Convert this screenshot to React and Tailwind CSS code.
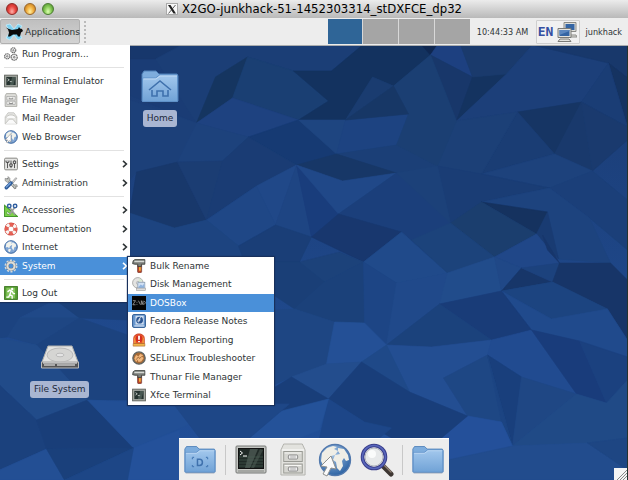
import React from "react";

const FACETS = [
  ["0,45 182,50 197,123 130,95 0,95", "#1a3c75"],
  ["130,45 182,45 182,50 156,59 130,59", "#17376c"],
  ["182,45 363,45 332,71 294,71 248,57 216,77 197,123 156,59", "#1b3e76"],
  ["248,57 216,77 197,123 233,98", "#153560"],
  ["248,57 233,98 299,120 329,101 294,71", "#1a3f73"],
  ["294,71 332,71 363,45 422,45 431,55 394,86 373,77 346,120 299,120 329,101", "#13325f"],
  ["373,77 394,86 346,120", "#1a3c70"],
  ["233,98 197,123 249,137 299,120", "#1e4280"],
  ["130,100 197,123 178,162 137,172 130,180", "#1c4079"],
  ["197,123 249,137 223,161 178,162", "#1d427c"],
  ["249,137 299,120 337,154 297,165", "#163a73"],
  ["299,120 346,120 337,154", "#1e4580"],
  ["346,120 409,114 397,145 337,154", "#1d4381"],
  ["337,154 397,145 438,166 397,173 370,165", "#1b3f77"],
  ["297,165 337,154 397,173 343,181", "#173767"],
  ["137,172 178,162 207,220 175,228 130,213", "#18386b"],
  ["178,162 223,161 207,220", "#1b3d73"],
  ["223,161 249,137 297,165 257,186 207,220", "#1a3c74"],
  ["297,165 257,186 276,225", "#204888"],
  ["257,186 207,220 239,246 276,225", "#1f4786"],
  ["130,213 175,228 207,220 239,246 245,262 130,262", "#1d4480"],
  ["297,165 276,225 300,262 312,237", "#1e4583"],
  ["297,165 312,237 339,214", "#193d7c"],
  ["297,165 343,181 397,173 339,214", "#204888"],
  ["397,173 451,223 432,259 402,232 339,214", "#1b3f7b"],
  ["339,214 312,237 364,262 402,232", "#18376e"],
  ["276,225 239,246 245,262 300,262 312,237", "#1a3e77"],
  ["422,45 438,45 431,55", "#0f2750"],
  ["431,55 438,45 461,45 473,77", "#1d4080"],
  ["431,55 473,77 457,121", "#18376a"],
  ["473,77 507,74 457,121", "#143360"],
  ["461,45 533,45 507,74 473,77", "#1a3a6c"],
  ["533,45 609,63 582,102 518,112 457,121 507,74", "#1c3f79"],
  ["533,45 628,45 628,78 609,63", "#18386b"],
  ["609,63 628,78 628,127", "#153361"],
  ["609,63 628,127 582,102", "#1a3d75"],
  ["518,112 582,102 555,154", "#163564"],
  ["582,102 593,171 555,154", "#19396c"],
  ["582,102 628,127 628,140 593,171", "#1a3a6e"],
  ["518,112 555,154 482,174", "#1a3d74"],
  ["457,121 518,112 482,174 438,166", "#1c4077"],
  ["394,86 431,55 457,121 438,166 397,145 409,114", "#1b3f73"],
  ["394,86 346,120 409,114", "#173766"],
  ["482,174 555,154 593,171 550,188", "#1d427c"],
  ["593,171 628,200 628,250 590,218 550,188", "#1b3f79"],
  ["438,166 482,174 550,188 482,202 451,223", "#1a3d75"],
  ["397,173 438,166 451,223", "#1c4179"],
  ["482,202 550,188 590,218 611,263 559,259 548,212", "#1d437e"],
  ["482,202 548,212 537,234", "#15325f"],
  ["548,212 559,259 537,234", "#193b72"],
  ["482,202 451,223 495,257 537,234", "#1b3e6e"],
  ["402,232 432,259 448,273 397,283 364,262", "#204a8a"],
  ["451,223 495,257 448,273 412,240", "#1c437b"],
  ["537,234 495,257 522,268 560,263", "#204788"],
  ["300,262 340,252 364,262 325,282", "#1c427a"],
  ["274,262 300,262 325,282 295,309 274,295", "#1a3f77"],
  ["364,262 325,282 295,309 335,322 365,323", "#1b417a"],
  ["364,262 397,283 387,345 365,323", "#1d4585"],
  ["397,283 448,273 440,304 387,345", "#20498a"],
  ["448,273 495,257 502,291 440,304", "#214c8b"],
  ["495,257 522,268 502,291", "#204887"],
  ["522,268 553,282 502,291", "#173669"],
  ["522,268 560,263 553,282", "#1c427d"],
  ["543,235 560,263 548,250", "#17366b"],
  ["560,263 611,263 628,280 628,340 608,309 553,282", "#173568"],
  ["502,291 553,282 608,309 552,319", "#1c4480"],
  ["502,291 552,319 608,309 628,340 628,357 532,330", "#204a8c"],
  ["440,304 502,291 532,330 492,340", "#193c78"],
  ["440,304 492,340 432,347 387,345", "#1b427c"],
  ["387,345 432,347 492,340 488,355 444,378 468,416 410,392", "#234e92"],
  ["488,355 492,340 532,330 577,394 522,377", "#214b90"],
  ["532,330 580,341 607,403 577,394", "#193c7b"],
  ["580,341 628,357 628,385 607,403", "#1b417f"],
  ["488,355 444,378 468,416 502,422", "#1e4784"],
  ["488,355 522,377 513,446", "#193f7c"],
  ["488,355 513,446 502,422", "#1c4482"],
  ["522,377 577,394 513,446", "#1f4784"],
  ["577,394 607,403 628,380 628,438 588,443 513,446", "#204a86"],
  ["468,416 502,422 513,446 448,465 442,435", "#24509a"],
  ["513,446 588,443 628,470 628,480 448,480 448,460", "#224c8d"],
  ["588,443 628,438 628,470", "#1e4683"],
  ["274,310 295,309 335,322 327,364 292,377 274,385", "#1e4683"],
  ["335,322 365,323 387,345 362,362 327,364", "#245096"],
  ["387,345 410,392 362,362", "#1f4988"],
  ["292,377 327,364 362,362 329,399", "#234d8d"],
  ["274,388 292,377 329,399 283,413 274,411", "#193e79"],
  ["362,362 410,392 468,416 442,438 392,438 365,422 329,399", "#193e7a"],
  ["329,399 365,422 392,428 380,438 320,438", "#1d4688"],
  ["274,413 329,399 320,430 300,438 250,438", "#245299"],
  ["0,300 56,300 20,318 8,337 0,338", "#1c4380"],
  ["56,300 80,318 20,318", "#204988"],
  ["56,300 128,300 128,320 80,318", "#1b4079"],
  ["20,318 80,318 37,345 8,337", "#1e4683"],
  ["80,318 128,335 128,400 88,400 37,345", "#1c437f"],
  ["0,338 37,345 88,400 37,420 0,385", "#214b89"],
  ["0,385 37,420 47,449 0,470", "#1b417d"],
  ["37,420 88,400 134,448 47,449", "#193e79"],
  ["88,400 174,404 200,420 134,448", "#224f95"],
  ["0,470 47,449 65,480 0,480", "#234f94"],
  ["47,449 134,448 65,480", "#1a407b"],
  ["134,448 180,430 180,480 128,480", "#24519a"],
  ["134,448 128,480 65,480", "#1d4686"],
  ["174,404 290,404 250,438 200,438", "#1e4787"],
];

function Wallpaper() {
  return (
    <svg className="absolute inset-0 h-full w-full" viewBox="0 46 628 434" preserveAspectRatio="xMidYMid slice" aria-hidden="true">
      <defs>
        <linearGradient id="sky" x1="0" y1="0" x2="0" y2="1">
          <stop offset="0" stopColor="#1a3b72" />
          <stop offset="1" stopColor="#22509a" />
        </linearGradient>
      </defs>
      <rect y="45" width="628" height="435" fill="url(#sky)" />
      {FACETS.map(([points, fill]) => (
        <polygon key={points} points={points} fill={fill} stroke={fill} strokeWidth="0.6" />
      ))}
    </svg>
  );
}

function Glyph({ children, className = "h-3.5 w-3.5" }) {
  return (
    <svg className={`${className} shrink-0`} viewBox="0 0 24 24" fill="none" aria-hidden="true">
      {children}
    </svg>
  );
}

const globe = (
  <>
    <circle cx="12" cy="12" r="10.8" fill="#7fa5d4" stroke="#35619c" strokeWidth="1.6" />
    <path d="M4 6 9 2.5l5 .5-2 3 2 2-4 3-1 3-3-2-3 1zM15 4l5 3 1 4-3 1-2 6-3-5 1-4-2-2zM8 15l4 1-2 5-3-2z" fill="#f1f2ec" />
  </>
);

const icons = {
  run: (
    <g stroke="#6c6c6c" strokeWidth="2" fill="#eee">
      <circle cx="16" cy="5.5" r="4.2" strokeDasharray="2.6 .8" />
      <circle cx="5.5" cy="16" r="4.5" strokeDasharray="2.6 .8" />
      <circle cx="17.5" cy="17.5" r="5.2" strokeDasharray="2.6 .8" />
      <circle cx="16" cy="5.5" r="1" strokeWidth="1.4" />
      <circle cx="5.5" cy="16" r="1.2" strokeWidth="1.4" />
      <circle cx="17.5" cy="17.5" r="1.4" strokeWidth="1.4" />
    </g>
  ),
  terminal: (
    <>
      <rect x="1" y="2" width="22" height="20" fill="#a4a8a2" stroke="#60645e" strokeWidth="1.6" />
      <rect x="4" y="5" width="16" height="14" fill="#263330" />
      <path d="m6 8 3 2-3 2M10 13h4" stroke="#e6eae6" strokeWidth="1.3" />
      <path d="m14 5-4 14h6l4-14z" fill="#71827a" opacity=".45" />
    </>
  ),
  files: (
    <>
      <path d="M4 1h16l2 4v18H2V5z" fill="#ddddd9" stroke="#a0a09b" strokeWidth="1.3" />
      <rect x="5" y="6" width="14" height="6" fill="#f3f3f0" stroke="#999" />
      <rect x="5" y="14" width="14" height="6" fill="#f3f3f0" stroke="#999" />
      <path d="M9 8v2h6V8M9 16v2h6v-2" stroke="#777" strokeWidth="1.4" />
    </>
  ),
  mail: (
    <>
      <path d="M2 10 7 3h10l5 7v12H2z" fill="#e6e6e3" stroke="#c0c0bc" strokeWidth="1.3" />
      <path d="m2 22 7-8h6l7 8M3 12c3-7 15-7 18 0" stroke="#bdbdb8" strokeWidth="1.4" fill="#fafafa" />
    </>
  ),
  web: (
    <>
      {globe}
      <path d="M12 6v15l-3-3-3 4-2-1 2-4H2z" fill="#fff" stroke="#888" strokeWidth="1" />
    </>
  ),
  internet: globe,
  settings: (
    <>
      <rect x="1" y="2" width="22" height="20" rx="2" fill="#e6e6e4" stroke="#858581" strokeWidth="1.7" />
      <path d="M6 6v13M12 6v13M18 6v13" stroke="#444" strokeWidth="1.5" />
      <path d="M3.5 6v3h5V6M10 12h4v4h-4zM16 7h4v4h-4z" stroke="#333" strokeWidth="1.5" fill="#eee" />
    </>
  ),
  admin: (
    <>
      <path d="m6 6 13 14" stroke="#777b78" strokeWidth="4.5" strokeLinecap="round" />
      <path d="m6 6 13 14" stroke="#d8dad6" strokeWidth="2.3" strokeLinecap="round" />
      <path d="M2 4v4l4 3 4-3V4L7 1v4H5zM16 18l2-3h4l1 3h-3v3l-2 1z" fill="#c2c5c0" stroke="#777" />
      <path d="m13 11 7-8 2 1-7 9z" fill="#ddd" stroke="#777" />
      <path d="m4 20 8-8" stroke="#2e5c9b" strokeWidth="6" strokeLinecap="round" />
      <path d="m4 19 7-7" stroke="#7ba6dc" strokeWidth="2" strokeLinecap="round" />
    </>
  ),
  accessories: (
    <>
      <path d="M1 4v19h22z" fill="#7ed24b" stroke="#43962a" strokeWidth="1.8" />
      <path d="M5 14v5h6z" fill="#fff" stroke="#43962a" />
      <path d="m18 8-9 12M10 8l9 12" stroke="#9a9d9a" strokeWidth="3" />
      <circle cx="9" cy="5" r="3" stroke="#315fa0" strokeWidth="2.5" fill="#fff" />
      <circle cx="19" cy="5" r="3" stroke="#315fa0" strokeWidth="2.5" fill="#fff" />
    </>
  ),
  docs: (
    <>
      <circle cx="12" cy="12" r="7.8" stroke="#c84037" strokeWidth="7" />
      <circle cx="12" cy="12" r="7.8" stroke="#e66054" strokeWidth="5.3" />
      <circle cx="12" cy="12" r="7.8" stroke="#f8f6f4" strokeWidth="5.5" strokeDasharray="5 7.25" strokeDashoffset="-3.6" />
    </>
  ),
  gear: (
    <>
      <circle cx="12" cy="12" r="9.5" stroke="#d5d9d9" strokeWidth="3.2" strokeDasharray="3.6 2.35" />
      <circle cx="12" cy="12" r="6.2" stroke="#777" strokeWidth="5" />
      <circle cx="12" cy="12" r="6.2" stroke="#dddeda" strokeWidth="3.7" />
    </>
  ),
  logout: (
    <>
      <rect x="1" y="1" width="22" height="22" fill="#559d32" stroke="#38751b" strokeWidth="1.5" />
      <rect x="4" y="3" width="15" height="18" fill="#84c45c" />
      <circle cx="14" cy="5" r="2" fill="#fff" />
      <path d="m6 10 4-3 4 2 2 4h3M12 9l-2 6 4 2v5M10 15l-2 4H4" stroke="#fff" strokeWidth="2.4" />
    </>
  ),
  hammer: (
    <>
      <rect x="9.5" y="9" width="7" height="14.500" rx="2" fill="#bd432a" stroke="#5b3023" />
      <path d="M12 13h3v7h-3z" fill="#efb238" />
      <path d="M2 3 5 1h17v8h-6v4h-6V9H5L1 8z" fill="#7d807c" stroke="#393c39" strokeWidth="1.4" />
      <path d="M4 3h17v2.500H4z" fill="#d6d9d4" />
    </>
  ),
  disk: (
    <>
      <circle cx="10" cy="10" r="9" fill="#e4e4e2" stroke="#a5a5a2" strokeWidth="1.5" />
      <path d="m10 10 3-8 5 4z" fill="#d7ead0" />
      <circle cx="10" cy="10" r="2.5" fill="#fff" stroke="#999" />
      <rect x="10" y="9" width="12" height="11" fill="#d2e1f4" stroke="#879aae" strokeWidth="1.3" />
      <path d="m11 17 4-4 3 2 3-4v8H11z" fill="#8fb3df" />
      <rect x="8" y="19" width="15" height="4" fill="#ddd" stroke="#999" />
    </>
  ),
  dos: (
    <>
      <rect width="24" height="24" fill="#050505" />
      <path d="M1.500 8h4.500l-4.500 7H6M8.500 10v1.500M8.500 13.500V15M11 8l3.500 7M16 15V8l3 7V8M21 8.500l2 3-2 3" stroke="#a8a8a8" strokeWidth="1.300" />
    </>
  ),
  fedora: (
    <>
      <rect x="1" y="1" width="22" height="22" rx="2" fill="#6997ce" stroke="#2e5a94" strokeWidth="1.7" />
      <path d="M6 3h14v15H6z" fill="#d3e1f2" />
      <circle cx="13" cy="10.500" r="5.800" fill="#2b5591" />
      <path d="M15.500 6.500c-2.500-.5-3 1-3 3v2c0 2.500-3 2-2.500.5s1.500-2 4.500-2" stroke="#fff" strokeWidth="1.5" />
      <path d="M4 20.500h17" stroke="#fff" strokeWidth="1.500" />
    </>
  ),
  problem: (
    <>
      <path d="M3 18V9c0-10 18-10 18 0v9z" fill="#e8562a" stroke="#c8341a" strokeWidth="1.4" />
      <path d="M4 17V9l2-4v12M20 17V9l-2-4v12" fill="#f8b342" />
      <path d="M2 18h20v4.500H2z" fill="#f0b44a" stroke="#a8672a" />
      <circle cx="12" cy="10" r="6" fill="#d52e22" />
      <path d="M12 4.500v7M12 13.500V16" stroke="#fff" strokeWidth="3" />
    </>
  ),
  selinux: (
    <>
      <circle cx="12" cy="12" r="10.5" fill="#a66a36" stroke="#606462" strokeWidth="2.4" />
      <path d="m4 13 3-6 4 2 3-4 5 2-2 3 3 2-4 6-5 1-1-4-3 4z" fill="#f2b77c" />
      <path d="m7 15 4-5 2 3 4-4" stroke="#8d5a30" strokeWidth="1.300" />
    </>
  ),
};

const menuGroups = [
  { grid: "h-[18px] grid-rows-1", items: [["run", "Run Program..."]] },
  { grid: "h-[74px] grid-rows-4", items: [["terminal", "Terminal Emulator"], ["files", "File Manager"], ["mail", "Mail Reader"], ["web", "Web Browser"]] },
  { grid: "h-[37px] grid-rows-2", items: [["settings", "Settings", true], ["admin", "Administration", true]] },
  { grid: "h-[74px] grid-rows-4", items: [["accessories", "Accessories", true], ["docs", "Documentation", true], ["internet", "Internet", true], ["gear", "System", true]] },
  { grid: "h-[18px] grid-rows-1", items: [["logout", "Log Out"]] },
];

const systemItems = [
  ["hammer", "Bulk Rename"],
  ["disk", "Disk Management"],
  ["dos", "DOSBox"],
  ["fedora", "Fedora Release Notes"],
  ["problem", "Problem Reporting"],
  ["selinux", "SELinux Troubleshooter"],
  ["hammer", "Thunar File Manager"],
  ["terminal", "Xfce Terminal"],
];

function MenuRow({ icon, label, arrow, active }) {
  return (
    <button
      type="button"
      className={`flex h-full w-full items-center gap-1 pl-1 text-left whitespace-nowrap ${active ? "bg-[#4a90d9] text-white" : "text-[#2e3436]"}`}
    >
      <Glyph>{icons[icon]}</Glyph>
      <span className="flex-1">{label}</span>
      {arrow && (
        <svg className="h-2 w-1.5 shrink-0" viewBox="0 0 6 8" fill="none" aria-hidden="true">
          <path d="m1 .8 3.4 3.2L1 7.2" stroke="currentColor" strokeWidth="1.6" />
        </svg>
      )}
    </button>
  );
}

function SystemMenu() {
  return (
    <ul className="absolute top-0 left-full grid h-[148px] w-[146px] grid-rows-8 bg-white shadow-[0_0_1px_1px_#18305c]">
      {systemItems.map(([icon, label]) => (
        <li key={label}>
          <MenuRow icon={icon} label={label} active={label === "DOSBox"} />
        </li>
      ))}
    </ul>
  );
}

function ApplicationsMenu() {
  return (
    <nav className="absolute top-full left-0 z-20 w-[130px] bg-white pr-0.5 shadow-[0_1px_1px_#18305c]" aria-label="Applications">
      {menuGroups.map((group, i) => (
        <React.Fragment key={i}>
          {i > 0 && (
            <div className="flex h-[9px] items-center px-1">
              <hr className="w-full border-[#e2e2e2]" />
            </div>
          )}
          <ul className={`grid ${group.grid}`}>
            {group.items.map(([icon, label, arrow]) => (
              <li key={label} className="relative">
                <MenuRow icon={icon} label={label} arrow={arrow} active={label === "System"} />
                {label === "System" && <SystemMenu />}
              </li>
            ))}
          </ul>
        </React.Fragment>
      ))}
    </nav>
  );
}

function TitleBar() {
  return (
    <header className="relative flex h-[18px] items-center justify-center bg-linear-to-b from-[#ececec] to-[#b9b9b9]">
      <div className="absolute left-1.5 flex gap-1.5">
        <button type="button" aria-label="Close" className="h-3 w-3 rounded-full border border-[#8f2a26] bg-radial-[at_50%_75%] from-[#ffb0a8] via-[#e8453f] to-[#a82320]" />
        <button type="button" aria-label="Minimize" className="h-3 w-3 rounded-full border border-[#99662a] bg-radial-[at_50%_75%] from-[#fff0a0] via-[#efab3c] to-[#b06e1c]" />
        <button type="button" aria-label="Zoom" className="h-3 w-3 rounded-full border border-[#4b7c31] bg-radial-[at_50%_75%] from-[#dcffb0] via-[#82c752] to-[#447c28]" />
      </div>
      <div className="flex items-center gap-1">
        <svg className="h-3 w-3" viewBox="0 0 12 12" aria-hidden="true">
          <rect x=".5" y=".5" width="11" height="11" fill="#f7f7f7" stroke="#aaa" />
          <path d="M2 2h2.5L10 10.500H7.500z" fill="#222" />
          <path d="m9.500 2-7 8.500" stroke="#333" strokeWidth=".8" />
        </svg>
        <h1 className="font-['DejaVu_Sans_Condensed','DejaVu_Sans',sans-serif] text-[13px] leading-4 text-black">X2GO-junkhack-51-1452303314_stDXFCE_dp32</h1>
      </div>
    </header>
  );
}

function Panel() {
  return (
    <div className="relative z-10 flex h-7 items-center border-b border-[#a9acae] bg-[#ededed] text-[#2e3436]">
      <button type="button" className="flex h-[25px] w-20 items-center gap-0.5 rounded-[2px] border border-[#b0b0b0] bg-linear-to-b from-[#bfbfbf] to-[#d3d3d3] pl-1 whitespace-nowrap">
        <svg className="h-[18px] w-[18px] shrink-0" viewBox="0 0 18 18" aria-hidden="true">
          <path d="m1 2 4-1 4 5 4-5 4 2-4 6 4 6-4 2-4-5-4 5-4-2 4-6z" fill="#7ed0f0" stroke="#c4eefb" strokeWidth=".8" />
          <path d="M1 4.500 4 6l3 1 6-1 1-2 1 1.500 2 .5 1 2-2 1.500-1 4h-2l-1-2H8l-3 2H3l1-4-1-3z" fill="#0a0a0a" />
        </svg>
        Applications
      </button>
      <div className="ml-1 h-[22px] border-l-2 border-dotted border-[#bbb]" />
      <ApplicationsMenu />
      <div className="ml-auto flex h-[25px] w-[142px] gap-px bg-[#d8d8d8]">
        <button type="button" aria-label="Workspace 1" className="flex-1 bg-[#2f6597]" />
        <button type="button" aria-label="Workspace 2" className="flex-1 bg-[#a5a5a5]" />
        <button type="button" aria-label="Workspace 3" className="flex-1 bg-[#a5a5a5]" />
        <button type="button" aria-label="Workspace 4" className="flex-1 bg-[#a5a5a5]" />
      </div>
      <time className="w-[66px] text-center font-['DejaVu_Sans_Condensed','DejaVu_Sans',sans-serif] whitespace-nowrap">10:44:33 AM</time>
      <div className="flex h-6 w-11 items-center justify-center gap-1 rounded-[1px] border border-[#cfcfcf] bg-[#f1f1f1]">
        <span className="font-['DejaVu_Sans_Mono',monospace] text-[13px] font-bold text-[#3550a2]">EN</span>
        <svg className="h-5 w-5" viewBox="0 0 20 20" aria-hidden="true">
          <path d="M7 .5h12v9H7zM9 13h10l1 2H9z" fill="#deded9" stroke="#8b8b87" />
          <path d="M8.500 2h9v6h-9z" fill="#3465a4" />
          <path d="M1 6.500h13v9H1zM3 17h9l2 2.500H1z" fill="#e3e3de" stroke="#7a7a76" />
          <path d="M2.500 8h10v6h-10z" fill="#3465a4" />
          <path d="m2.500 13 10-4V8h-10z" fill="#5b87bf" />
        </svg>
      </div>
      <span className="mr-1.5 ml-1.5 font-['DejaVu_Sans_Condensed','DejaVu_Sans',sans-serif]">junkhack</span>
    </div>
  );
}

function Folder({ className, children }) {
  return (
    <svg className={className} viewBox="0 0 38 34" fill="none" aria-hidden="true">
      <defs>
        <linearGradient id="folder" x1="0" y1="0" x2="0" y2="1">
          <stop offset="0" stopColor="#a3c8ed" />
          <stop offset="1" stopColor="#70a2d6" />
        </linearGradient>
      </defs>
      <path d="M1 31V4l2-3h12l3 3h18l1 2v25z" fill="#7eaddd" stroke="#4e80b8" />
      <path d="M1.500 8h13l4-3h18v26.500h-35z" fill="url(#folder)" stroke="#5f91c9" />
      <path d="M2.500 9h12.500l4-3h17" stroke="#c0daf4" />
      <path d="M2 32.500h34" stroke="#25406b" strokeOpacity=".4" />
      {children}
    </svg>
  );
}

function Desktop() {
  return (
    <>
      <button type="button" className="absolute top-6 left-[141px] flex flex-col items-center gap-1.5">
        <Folder className="h-[34px] w-[38px]">
          <path d="m8 20 11-9 11 9" stroke="#3f71ad" strokeWidth="1.6" />
          <path d="M11 20v6h5v-5h6v5h5v-6" stroke="#3f71ad" strokeWidth="1.6" />
        </Folder>
        <span className="rounded-[3px] bg-[#a9b6d2] px-1 text-[#20283a] leading-[17px]">Home</span>
      </button>
      <button type="button" className="absolute top-[299px] left-[30px] flex flex-col items-center gap-3">
        <svg className="h-6 w-10" viewBox="0 0 40 24" aria-hidden="true">
          <path d="M8 1h24l6 16H2z" fill="#e3e3e1" stroke="#b0b0ad" />
          <ellipse cx="20" cy="10" rx="13" ry="7" fill="#d5d5d3" stroke="#bababa" />
          <ellipse cx="20" cy="10" rx="4" ry="1.8" fill="#e4e4e4" stroke="#bbb" />
          <path d="M1.500 17h37v6h-37z" fill="#555" stroke="#bbb" />
          <path d="M4 19h11v2H4zM17 19h18v2H17z" fill="#aaa" />
          <path d="M3 18h34" stroke="#f6f6f6" />
        </svg>
        <span className="rounded-[3px] bg-[#a9b6d2] px-1 text-[#20283a] leading-[17px] whitespace-nowrap">File System</span>
      </button>
    </>
  );
}

function DockButton({ label, children }) {
  return (
    <button type="button" aria-label={label} className="flex h-[34px] w-[34px] shrink-0 items-center justify-center">
      {children}
    </button>
  );
}

function Dock() {
  return (
    <div className="relative flex h-[42px] items-center gap-2 border-t border-white bg-[#ededed] px-1">
      <DockButton label="Desktop">
        <Folder className="h-[30px] w-8">
          <path d="M10 14h2M26 14h2M10 25h2M26 25h2M10 14v2M28 14v2M10 23v2M28 23v2" stroke="#4a7db8" strokeWidth="1.500" />
          <path d="M16 16v7.500h2.500c4.500 0 4.500-7.500 0-7.500z" stroke="#3f71ad" strokeWidth="1.800" />
        </Folder>
      </DockButton>
      <div className="h-[30px] w-px bg-[#c8c8c8]" />
      <DockButton label="Terminal">
        <svg className="h-[30px] w-8" viewBox="0 0 32 30" fill="none" aria-hidden="true">
          <rect x="1" y="1" width="30" height="27" rx="1" fill="#c3c5c1" stroke="#777976" />
          <rect x="3.500" y="3.500" width="25" height="20" fill="#202a27" stroke="#111" />
          <path d="m15 4-5 19h5l8-19z" fill="#87968d" opacity=".35" />
          <path d="m25 4-9 19h3l9-18z" fill="#87968d" opacity=".25" />
          <path d="M4 12h24M4 15h24M4 18h24M4 21h24" stroke="#4c6155" strokeWidth=".6" />
          <path d="m5 6 2.500 2L5 10M8 11h4" stroke="#fff" />
          <path d="M3 26h26" stroke="#858783" />
        </svg>
      </DockButton>
      <DockButton label="File Manager">
        <svg className="h-[34px] w-[26px]" viewBox="0 0 28 34" fill="none" preserveAspectRatio="none" aria-hidden="true">
          <path d="m4 1-3 6v25h26V7l-3-6z" fill="#e2e2de" stroke="#b2b2ad" />
          <path d="M2 7h24" stroke="#fff" />
          <rect x="4" y="8.500" width="20" height="10" fill="#d5d5d0" stroke="#999a94" />
          <rect x="4" y="21" width="20" height="9" fill="#d5d5d0" stroke="#999a94" />
          <path d="M5 10h18M5 22.500h18" stroke="#f8f8f6" />
          <rect x="9" y="12" width="10" height="4" rx="1" fill="#eee" stroke="#888" />
          <rect x="9" y="24" width="10" height="4" rx="1" fill="#eee" stroke="#888" />
          <path d="M11 14h6M11 26h6" stroke="#aaa" />
        </svg>
      </DockButton>
      <DockButton label="Web Browser">
        <svg className="h-[34px] w-[34px]" viewBox="0 0 34 34" aria-hidden="true">
          <defs>
            <radialGradient id="sea" cx=".4" cy=".3" r=".7">
              <stop offset="0" stopColor="#a8c7e8" />
              <stop offset="1" stopColor="#2f65a5" />
            </radialGradient>
          </defs>
          <circle cx="17" cy="17" r="15.500" fill="url(#sea)" stroke="#5279ad" strokeWidth="1.300" />
          <path d="m4 10 5-5 6-2 4 1-3 2 4 2-3 4-4 1-2 4-4 1 4 4-5 2-3-6zM20 5l6 1 4 6 1 5-3 1-2-3-2 3 1 5-3 5-3-3-1-6-3-2 2-5 5-1-2-3z" fill="#efeee6" />
          <path d="m13 13 5 13-5-1-4 8-4-2 4-7-6-1z" fill="#fafafa" stroke="#8e908e" />
        </svg>
      </DockButton>
      <DockButton label="Application Finder">
        <svg className="h-[34px] w-[34px]" viewBox="0 0 34 34" fill="none" aria-hidden="true">
          <path d="m22 22 9 9" stroke="#3d3632" strokeWidth="5" strokeLinecap="round" />
          <path d="m23 21 8 8" stroke="#8e7e72" strokeWidth="1.500" strokeLinecap="round" />
          <circle cx="14" cy="14" r="11.500" fill="#e7e9ea" stroke="#3b3f8c" strokeWidth="3.600" />
          <circle cx="14" cy="14" r="11.500" stroke="#5968bd" strokeWidth="1.500" />
          <circle cx="14" cy="14" r="9" stroke="#b3b6bd" />
          <circle cx="12" cy="11" r="4" fill="#fff" opacity=".8" />
        </svg>
      </DockButton>
      <div className="h-[30px] w-px bg-[#c8c8c8]" />
      <DockButton label="Home Folder">
        <Folder className="h-[30px] w-8" />
      </DockButton>
    </div>
  );
}

export default function App() {
  return (
    <div className="flex min-h-screen flex-col font-['DejaVu_Sans',sans-serif] text-[9px] leading-3">
      <TitleBar />
      <Panel />
      <main className="relative flex flex-1 flex-col items-center justify-end overflow-hidden border-r border-[#24332f] bg-[#1d437f]">
        <Wallpaper />
        <Desktop />
        <Dock />
        <svg className="absolute right-0 bottom-0 h-3 w-[13px]" viewBox="0 0 13 12" aria-hidden="true">
          <rect width="13" height="12" fill="#f4f4f4" />
          <path d="m3 12 10-10M6 12l7-7M9 12l4-4" stroke="#888" />
        </svg>
      </main>
    </div>
  );
}
